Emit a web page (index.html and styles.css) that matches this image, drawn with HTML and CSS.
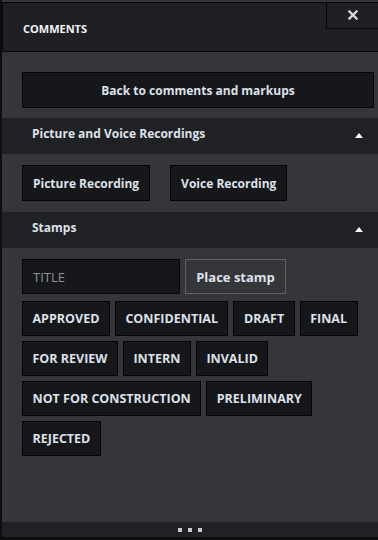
FILE: index.html
```html
<!DOCTYPE html>
<html>
<head>
<meta charset="utf-8">
<link rel="stylesheet" href="styles.css">
</head>
<body>
<div class="panel">
  <header class="head">
    <span class="head-title">COMMENTS</span>
    <button class="close" aria-label="Close">
      <svg width="10" height="10" viewBox="0 0 10 10"><path d="M1.5 1.5 L8.5 8.5 M8.5 1.5 L1.5 8.5" stroke="#d6d6d6" stroke-width="2.4" stroke-linecap="square"/></svg>
    </button>
  </header>
  <div class="content">
    <button class="btn back">Back to comments and markups</button>
    <div class="section-head"><span>Picture and Voice Recordings</span><span class="tri"></span></div>
    <div class="rec-row">
      <button class="btn">Picture Recording</button>
      <button class="btn">Voice Recording</button>
    </div>
    <div class="section-head"><span>Stamps</span><span class="tri"></span></div>
    <div class="stamp-input">
      <input class="title-input" type="text" placeholder="TITLE">
      <button class="place">Place stamp</button>
    </div>
    <div class="stamps">
      <button class="btn stamp">APPROVED</button>
      <button class="btn stamp">CONFIDENTIAL</button>
      <button class="btn stamp">DRAFT</button>
      <button class="btn stamp">FINAL</button>
      <button class="btn stamp">FOR REVIEW</button>
      <button class="btn stamp">INTERN</button>
      <button class="btn stamp">INVALID</button>
      <button class="btn stamp">NOT FOR CONSTRUCTION</button>
      <button class="btn stamp">PRELIMINARY</button>
      <button class="btn stamp">REJECTED</button>
    </div>
  </div>
  <div class="footer"><i></i><i></i><i></i></div>
</div>
</body>
</html>
```

FILE: styles.css
```css
* { box-sizing: border-box; }
html, body { margin: 0; padding: 0; }
body {
  width: 378px;
  height: 540px;
  overflow: hidden;
  background: #0e0e10;
  font-family: "Open Sans", "Noto Sans", sans-serif;
  color: #dde1ea;
}
.panel {
  margin-left: 2px;
  height: 537px;
  background: #35363a;
  display: flex;
  flex-direction: column;
}
.head {
  position: relative;
  height: 50px;
  margin-top: 2px;
  background: #1f2024;
  border: 1px solid #050505;
  border-right: none;
  display: flex;
  align-items: center;
  padding: 2px 0 0 20px;
}
.head-title {
  font-size: 11px;
  font-weight: 700;
  color: #f2f4f8;
}
.close {
  position: absolute;
  top: -1px;
  right: 0;
  width: 52px;
  height: 27px;
  background: #1f2024;
  border: 1px solid #050505;
  border-right: none;
  display: flex;
  align-items: center;
  justify-content: center;
  padding: 0 0 2px 0;
}
.content {
  flex: 1;
  display: flex;
  flex-direction: column;
  padding-top: 20px;
}
.btn {
  background: #16171a;
  border: 1px solid #050505;
  color: #dde1ea;
  font-family: inherit;
  font-size: 12px;
  font-weight: 700;
  height: 36px;
  padding: 0 10px;
  margin: 0;
}
.back {
  margin: 0 4px 0 20px;
}
.section-head {
  margin-top: 10px;
  height: 36px;
  background: #202124;
  display: flex;
  align-items: center;
  justify-content: space-between;
  padding: 0 15px 5px 30px;
  font-size: 12px;
  font-weight: 700;
  color: #dde1ea;
}
.tri {
  width: 0;
  height: 0;
  margin-top: 4px;
  border-left: 4px solid transparent;
  border-right: 4px solid transparent;
  border-bottom: 5px solid #ffffff;
}
.rec-row {
  display: flex;
  gap: 20px;
  padding: 11px 0 0 20px;
}
.rec-row + .section-head { margin-top: 11px; }
.stamp-input {
  display: flex;
  gap: 5px;
  padding: 11px 0 0 20px;
}
.title-input {
  width: 158px;
  height: 35px;
  background: #16171a;
  border: 1px solid #050505;
  color: #dde1ea;
  font-family: inherit;
  font-size: 13px;
  padding: 0 10px;
  outline: none;
}
.title-input::placeholder { color: #8c919b; }
.place {
  height: 35px;
  width: 101px;
  background: #35363a;
  border: 1px solid #606166;
  color: #dde1ea;
  font-family: inherit;
  font-size: 13px;
  font-weight: 700;
  padding: 0;
}
.stamps {
  display: flex;
  flex-wrap: wrap;
  gap: 5px;
  padding: 7px 0 0 20px;
}
.stamp {
  height: 35px;
  padding: 0 9.5px;
  font-size: 12.5px;
}
.footer {
  height: 15px;
  background: #202124;
  display: flex;
  align-items: center;
  justify-content: center;
  gap: 6px;
}
.footer i {
  width: 4px;
  height: 4px;
  background: #c8c8c8;
}
```
